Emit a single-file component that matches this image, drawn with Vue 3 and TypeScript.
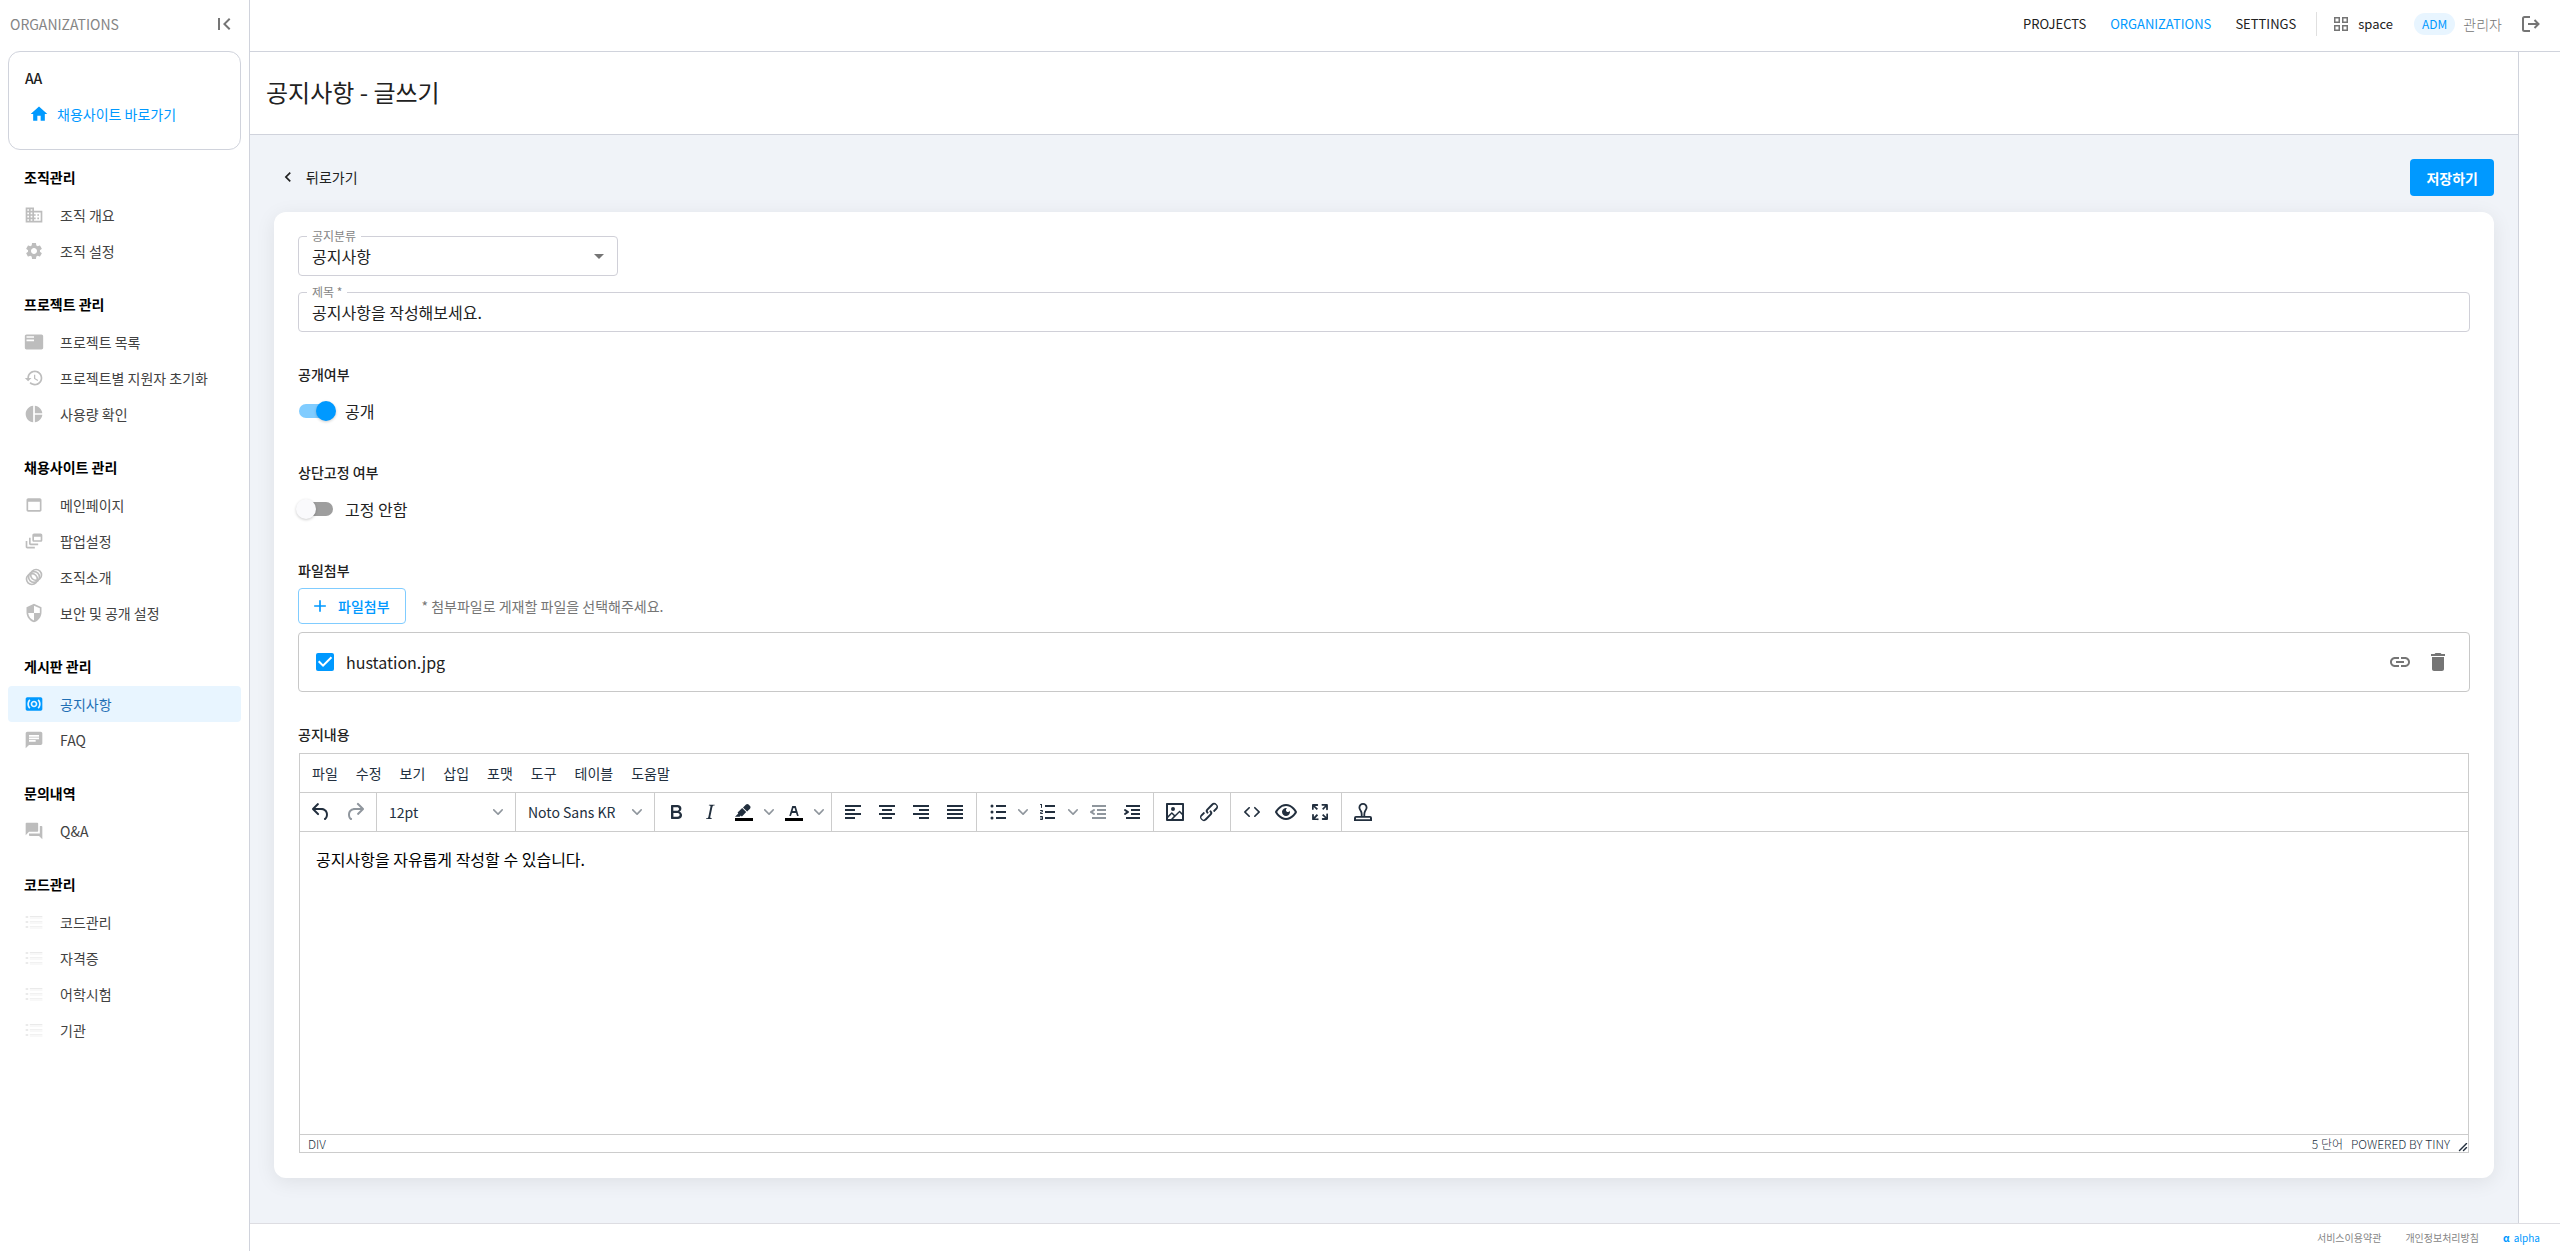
<script setup lang="ts">
import { ref } from 'vue'

interface MenuItem {
  label: string
  icon: string
  active?: boolean
}
interface MenuGroup {
  title: string
  items: MenuItem[]
}
interface Tool {
  name: string
  paths: string[]
  split?: boolean
  disabled?: boolean
  bar?: boolean
}

const icons: Record<string, string> = {
  business:
    'M12 7V3H2v18h20V7H12zM6 19H4v-2h2v2zm0-4H4v-2h2v2zm0-4H4V9h2v2zm0-4H4V5h2v2zm4 12H8v-2h2v2zm0-4H8v-2h2v2zm0-4H8V9h2v2zm0-4H8V5h2v2zm10 12h-8v-2h2v-2h-2v-2h2v-2h-2V9h8v10zm-2-8h-2v2h2v-2zm0 4h-2v2h2v-2z',
  settings:
    'M19.14 12.94c.04-.3.06-.61.06-.94 0-.32-.02-.64-.07-.94l2.03-1.58c.18-.14.23-.41.12-.61l-1.92-3.32c-.12-.22-.37-.29-.59-.22l-2.39.96c-.5-.38-1.03-.7-1.62-.94l-.36-2.54c-.04-.24-.24-.41-.48-.41h-3.84c-.24 0-.43.17-.47.41l-.36 2.54c-.59.24-1.13.57-1.62.94l-2.39-.96c-.22-.08-.47 0-.59.22L2.74 8.87c-.12.21-.08.47.12.61l2.03 1.58c-.05.3-.09.63-.09.94s.02.64.07.94l-2.03 1.58c-.18.14-.23.41-.12.61l1.92 3.32c.12.22.37.29.59.22l2.39-.96c.5.38 1.03.7 1.62.94l.36 2.54c.05.24.24.41.48.41h3.84c.24 0 .44-.17.47-.41l.36-2.54c.59-.24 1.13-.56 1.62-.94l2.39.96c.22.08.47 0 .59-.22l1.92-3.32c.12-.22.07-.47-.12-.61l-2.01-1.58zM12 15.6c-1.98 0-3.6-1.62-3.6-3.6s1.62-3.6 3.6-3.6 3.6 1.62 3.6 3.6-1.62 3.6-3.6 3.6z',
  playlist:
    'M21 3H3c-1.1 0-2 .9-2 2v14c0 1.1.9 2 2 2h18c1.1 0 2-.9 2-2V5c0-1.1-.9-2-2-2zm-9 8H3V9h9v2zm0-4H3V5h9v2z',
  restore:
    'M13 3c-4.97 0-9 4.03-9 9H1l3.89 3.89.07.14L9 12H6c0-3.87 3.13-7 7-7s7 3.13 7 7-3.13 7-7 7c-1.93 0-3.68-.79-4.94-2.06l-1.42 1.42C8.27 19.99 10.51 21 13 21c4.97 0 9-4.03 9-9s-4.03-9-9-9zm-1 5v5l4.28 2.54.72-1.21-3.5-2.08V8H12z',
  pie: 'M11 2v20c-5.07-.5-9-4.79-9-10s3.93-9.5 9-10zm2.03 0v8.99H22c-.47-4.74-4.24-8.52-8.97-8.99zm0 11.01V22c4.74-.47 8.5-4.25 8.97-8.99h-8.97z',
  web: 'M19 4H5c-1.11 0-2 .9-2 2v12c0 1.1.89 2 2 2h14c1.1 0 2-.9 2-2V6c0-1.1-.89-2-2-2zm0 14H5V8h14v10z',
  feed: 'M8 8H6v7c0 1.1.9 2 2 2h9v-2H8V8zM20 3h-8c-1.1 0-2 .9-2 2v6c0 1.1.9 2 2 2h8c1.1 0 2-.9 2-2V5c0-1.1-.9-2-2-2zm0 8h-8V7h8v4zM4 12H2v7c0 1.1.9 2 2 2h9v-2H4v-7z',
  shield:
    'M12 1L3 5v6c0 5.55 3.84 10.74 9 12 5.16-1.26 9-6.45 9-12V5l-9-4zM12 12H5c.53 4.12 3.28 7.79 7 8.94V12h7V6.3l-7-3.11z',
  surround:
    'M20 4H4c-1.1 0-2 .9-2 2v12c0 1.1.9 2 2 2h16c1.1 0 2-.9 2-2V6c0-1.1-.9-2-2-2zM7.76 16.24l-1.41 1.41C4.78 16.1 4 14.05 4 12s.78-4.1 2.34-5.66l1.41 1.41C6.59 8.93 6 10.46 6 12s.59 3.07 1.76 4.24zM12 16c-2.21 0-4-1.79-4-4s1.79-4 4-4 4 1.79 4 4-1.79 4-4 4zm5.66 1.66l-1.41-1.41C17.41 15.07 18 13.54 18 12s-.59-3.07-1.76-4.24l1.41-1.41C19.22 7.9 20 9.95 20 12s-.78 4.1-2.34 5.66zM12 10c-1.1 0-2 .9-2 2s.9 2 2 2 2-.9 2-2-.9-2-2-2z',
  chat: 'M20 2H4c-1.1 0-1.99.9-1.99 2L2 22l4-4h14c1.1 0 2-.9 2-2V4c0-1.1-.9-2-2-2zM6 9h12v2H6V9zm8 5H6v-2h8v2zm4-6H6V6h12v2z',
  qna: 'M21 6h-2v9H6v2c0 .55.45 1 1 1h11l4 4V7c0-.55-.45-1-1-1zm-4 6V3c0-.55-.45-1-1-1H3c-.55 0-1 .45-1 1v14l4-4h10c.55 0 1-.45 1-1z',
  list: 'M2 5h3v2H2zM2 11h3v2H2zM2 17h3v2H2zM7 5h15v1H7zM7 7h15v.5H7zM7 11h15v.7H7zM7 13h15v.5H7zM7 17h15v.7H7zM7 19h15v.5H7z',
}

const groups: MenuGroup[] = [
  {
    title: '조직관리',
    items: [
      { label: '조직 개요', icon: 'business' },
      { label: '조직 설정', icon: 'settings' },
    ],
  },
  {
    title: '프로젝트 관리',
    items: [
      { label: '프로젝트 목록', icon: 'playlist' },
      { label: '프로젝트별 지원자 초기화', icon: 'restore' },
      { label: '사용량 확인', icon: 'pie' },
    ],
  },
  {
    title: '채용사이트 관리',
    items: [
      { label: '메인페이지', icon: 'web' },
      { label: '팝업설정', icon: 'feed' },
      { label: '조직소개', icon: 'rings' },
      { label: '보안 및 공개 설정', icon: 'shield' },
    ],
  },
  {
    title: '게시판 관리',
    items: [
      { label: '공지사항', icon: 'surround', active: true },
      { label: 'FAQ', icon: 'chat' },
    ],
  },
  { title: '문의내역', items: [{ label: 'Q&A', icon: 'qna' }] },
  {
    title: '코드관리',
    items: [
      { label: '코드관리', icon: 'list' },
      { label: '자격증', icon: 'list' },
      { label: '어학시험', icon: 'list' },
      { label: '기관', icon: 'list' },
    ],
  },
]

const editorMenus = ['파일', '수정', '보기', '삽입', '포맷', '도구', '테이블', '도움말']

const historyTools: Tool[] = [
  {
    name: '실행 취소',
    paths: [
      'M6.4 8H12c3.7 0 6.2 2 6.8 5.1.6 2.7-.4 5.6-2.3 6.8a1 1 0 01-1-1.8c1.1-.6 1.8-2.7 1.4-4.6-.5-2.1-2.1-3.5-4.9-3.5H6.4l3.3 3.3a1 1 0 11-1.4 1.4l-5-5a1 1 0 010-1.4l5-5a1 1 0 011.4 1.4L6.4 8z',
    ],
  },
  {
    name: '다시 실행',
    disabled: true,
    paths: [
      'M17.6 10H12c-2.8 0-4.4 1.4-4.9 3.5-.4 2 .3 4 1.4 4.6a1 1 0 11-1 1.8c-2-1.2-2.9-4.1-2.3-6.8.6-3 3-5.1 6.8-5.1h5.6l-3.3-3.3a1 1 0 111.4-1.4l5 5a1 1 0 010 1.4l-5 5a1 1 0 01-1.4-1.4l3.3-3.3z',
    ],
  },
]

const toolGroups: Tool[][] = [
  [
    {
      name: '굵게',
      paths: [
        'M7.8 19c-.3 0-.5 0-.6-.2l-.2-.5V5.7c0-.2 0-.4.2-.5l.6-.2h5c1.5 0 2.7.3 3.5 1 .7.6 1.1 1.4 1.1 2.5a3 3 0 01-.6 1.9c-.4.6-1 1-1.6 1.2.4.1.9.3 1.3.6s.8.7 1 1.2c.4.4.5 1 .5 1.6 0 1.3-.4 2.3-1.3 3-.8.7-2.1 1-3.8 1H7.8zm5-8.3c.6 0 1.2-.1 1.6-.5.4-.3.6-.7.6-1.3 0-1.1-.8-1.7-2.3-1.7H9.3v3.5h3.4zm.5 6c.7 0 1.3-.1 1.7-.4.4-.4.6-.9.6-1.5s-.2-1-.7-1.4c-.4-.3-1-.4-2-.4H9.4v3.8h4z',
      ],
    },
    {
      name: '기울임꼴',
      paths: [
        'M16.7 4.7l-.1.9h-.3c-.6 0-1 0-1.4.3-.3.3-.4.6-.5 1.1l-2.1 9.8v.6c0 .5.4.8 1.4.8h.2l-.2.8H8l.2-.8h.2c1.1 0 1.8-.5 2-1.5l2-9.8.1-.5c0-.6-.4-.8-1.4-.8h-.3l.2-.9h5.8z',
      ],
    },
    {
      name: '배경색',
      split: true,
      bar: true,
      paths: [
        'M7.7 16.7H3l3.3-3.3-.7-.8L10.2 8l4 4.1-4 4.2c-.2.2-.6.2-.8 0l-.6-.7-1.1 1.1zm5-7.5L11 7.4l3-2.9a2 2 0 012.6 0L18 6c.7.7.7 2 0 2.7l-2.9 2.9-1.8-1.8-.5-.6',
      ],
    },
    {
      name: '글자색',
      split: true,
      bar: true,
      paths: [
        'M8.7 16h-.8a.5.5 0 01-.5-.6l2.7-9c.1-.3.3-.4.5-.4h2.8c.2 0 .4.1.5.4l2.7 9a.5.5 0 01-.5.6h-.8a.5.5 0 01-.4-.4l-.7-2.2c0-.3-.3-.4-.5-.4h-3.4c-.2 0-.4.1-.5.4l-.7 2.2c0 .3-.2.4-.4.4zm2.6-7.6l-.6 2a.5.5 0 00.5.6h1.6a.5.5 0 00.5-.6l-.6-2c0-.3-.3-.4-.5-.4h-.4c-.2 0-.4.1-.5.4z',
      ],
    },
  ],
  [
    { name: '왼쪽 정렬', paths: ['M4 5h16v2H4zM4 9h10v2H4zM4 13h16v2H4zM4 17h10v2H4z'] },
    { name: '가운데 정렬', paths: ['M4 5h16v2H4zM7 9h10v2H7zM4 13h16v2H4zM7 17h10v2H7z'] },
    { name: '오른쪽 정렬', paths: ['M4 5h16v2H4zM10 9h10v2H10zM4 13h16v2H4zM10 17h10v2H10z'] },
    { name: '양쪽 정렬', paths: ['M4 5h16v2H4zM4 9h16v2H4zM4 13h16v2H4zM4 17h16v2H4z'] },
  ],
  [
    {
      name: '글머리 기호',
      split: true,
      paths: [
        'M10 5h10v2H10zM10 11h10v2H10zM10 17h10v2H10zM6 4.5a1.5 1.5 0 100 3 1.5 1.5 0 000-3zM6 10.5a1.5 1.5 0 100 3 1.5 1.5 0 000-3zM6 16.5a1.5 1.5 0 100 3 1.5 1.5 0 000-3z',
      ],
    },
    {
      name: '번호 매기기',
      split: true,
      paths: [
        'M9 17h10v2H9zM9 11h10v2H9zM9 5h10v2H9zM6 4v3.5c0 .3-.2.5-.5.5a.5.5 0 01-.5-.5V5h-.5a.5.5 0 010-1H6zm-1 8.8l.2.2h1.3c.3 0 .5.2.5.5s-.2.5-.5.5H4.9a1 1 0 01-.9-1V13c0-.4.3-.8.6-1l1.2-.4.2-.3a.2.2 0 00-.2-.2H4.5a.5.5 0 01-.5-.5c0-.3.2-.5.5-.5h1.6c.5 0 .9.4.9 1v.1c0 .4-.3.8-.6 1l-1.2.4-.2.3zM7 17v2c0 .6-.4 1-1 1H4.5a.5.5 0 010-1h1.2c.2 0 .3-.1.3-.3 0-.2-.1-.3-.3-.3H4.4a.4.4 0 110-.8h1.3c.2 0 .3-.1.3-.3 0-.2-.1-.3-.3-.3H4.5a.5.5 0 110-1H6c.6 0 1 .4 1 1z',
      ],
    },
    {
      name: '내어쓰기',
      disabled: true,
      paths: [
        'M6 5h14v2H6zM11 9h9v2h-9zM11 13h9v2h-9zM6 17h14v2H6zM8.6 13.2a1 1 0 01-1.2 1.6l-3-2a1 1 0 010-1.6l3-2a1 1 0 011.2 1.6L6.8 12l1.8 1.2z',
      ],
    },
    {
      name: '들여쓰기',
      paths: [
        'M6 5h14v2H6zM11 9h9v2h-9zM11 13h9v2h-9zM6 17h14v2H6zM4.4 13.2L6.2 12l-1.8-1.2a1 1 0 011.2-1.6l3 2a1 1 0 010 1.6l-3 2a1 1 0 11-1.2-1.6z',
      ],
    },
  ],
  [
    {
      name: '이미지',
      paths: [
        'M5 15.7l3.3-3.2c.3-.3.7-.3 1 0L12 15l4.1-4c.3-.4.8-.4 1 0l2 1.9V5H5v10.7zM5 18V19h3l2.8-2.9-2-2L5 17.9zm14-3l-2.5-2.4-6.4 6.5H19v-4zM4 3h16c.6 0 1 .4 1 1v16c0 .6-.4 1-1 1H4a1 1 0 01-1-1V4c0-.6.4-1 1-1zm6 8a2 2 0 100-4 2 2 0 000 4z',
      ],
    },
    {
      name: '링크',
      paths: [
        'M6.2 12.3a1 1 0 011.4 1.4l-2.1 2a2 2 0 102.7 2.8l4.8-4.8a1 1 0 000-1.4 1 1 0 111.4-1.3 2.9 2.9 0 010 4L9.6 20a3.9 3.9 0 01-5.5-5.5l2-2zm11.6-.6a1 1 0 01-1.4-1.4l2-2a2 2 0 10-2.6-2.8L11 10.3a1 1 0 000 1.4A1 1 0 119.6 13a2.9 2.9 0 010-4L14.4 4a3.9 3.9 0 015.5 5.5l-2 2z',
      ],
    },
  ],
  [
    {
      name: '소스 코드',
      paths: [
        'M9.8 15.7c.3.3.3.8 0 1-.3.4-.9.4-1.2 0l-4.4-4.1a.8.8 0 010-1.2l4.4-4.2c.3-.3.9-.3 1.2 0 .3.3.3.8 0 1.1L6 12l3.8 3.7zM14.2 15.7c-.3.3-.3.8 0 1 .4.4.9.4 1.2 0l4.4-4.1c.3-.3.3-.9 0-1.2l-4.4-4.2a.8.8 0 00-1.2 0c-.3.3-.3.8 0 1.1L18 12l-3.8 3.7z',
      ],
    },
    {
      name: '미리보기',
      paths: [
        'M3.5 12.5c.5.8 1.1 1.6 1.8 2.3 2 2 4.2 3.2 6.7 3.2s4.7-1.2 6.7-3.2a16.2 16.2 0 002.1-2.8 15.7 15.7 0 00-2.1-2.8c-2-2-4.2-3.2-6.7-3.2a9.3 9.3 0 00-6.7 3.2A16.2 16.2 0 003.2 12c0 .2.2.3.3.5zm-2.4-1l.7-1.2L4 7.8C6.2 5.4 8.9 4 12 4c3 0 5.8 1.4 8.1 3.8a18.2 18.2 0 012.8 3.7v1l-.7 1.2-2.1 2.5c-2.3 2.4-5 3.8-8.1 3.8-3 0-5.8-1.4-8.1-3.8a18.2 18.2 0 01-2.8-3.7 1 1 0 010-1zm12-3.3a2 2 0 102.7 2.6 4 4 0 11-2.6-2.6z',
      ],
    },
    {
      name: '전체 화면',
      paths: [
        'M15.3 10l-1.2-1.3 2.9-3h-2.3a.9.9 0 110-1.7H19c.5 0 .9.4.9.9v4.4a.9.9 0 11-1.8 0V7l-2.9 3zm0 4l3 3v-2.3a.9.9 0 111.7 0V19c0 .5-.4.9-.9.9h-4.4a.9.9 0 110-1.8H17l-3-2.9 1.3-1.2zM10 15.4l-2.9 3h2.3a.9.9 0 110 1.7H5a.9.9 0 01-.9-.9v-4.4a.9.9 0 111.8 0V17l2.9-3 1.2 1.3zM8.7 10L5.7 7v2.3a.9.9 0 01-1.7 0V5c0-.5.4-.9.9-.9h4.4a.9.9 0 010 1.8H7l3 2.9-1.3 1.2z',
      ],
    },
  ],
  [
    {
      name: '도장',
      paths: [
        'M12 3a4.5 4.5 0 00-4.5 4.5c0 1.5.9 2.7 1.6 3.9.5.9.7 1.8.7 3V16H5a2 2 0 00-2 2v3h18v-3a2 2 0 00-2-2h-4.8v-1.6c0-1.2.2-2.1.7-3 .7-1.2 1.6-2.4 1.6-3.9A4.5 4.5 0 0012 3zm0 1.8c1.5 0 2.7 1.2 2.7 2.7 0 1-.6 1.9-1.3 3-.6 1.1-1 2.3-1 3.9V16h-.8v-1.6c0-1.6-.4-2.8-1-3.9-.7-1.1-1.3-2-1.3-3 0-1.5 1.2-2.7 2.7-2.7zM5 17.8h14v1.4H5z',
      ],
    },
  ],
]

const category = ref('공지사항')
const title = ref('공지사항을 작성해보세요.')
const isOpen = ref(true)
const isPinned = ref(false)
const fileChecked = ref(true)
const fontSize = ref('12pt')
const fontFamily = ref('Noto Sans KR')
const body = ref('공지사항을 자유롭게 작성할 수 있습니다.')
</script>

<template>
  <div class="shell">
    <aside class="sidebar">
      <div class="side-head">
        <span>ORGANIZATIONS</span>
        <button type="button" class="plain" aria-label="메뉴 접기">
          <svg class="i24" viewBox="0 0 24 24"><path d="M18.41 16.59L13.82 12l4.59-4.59L17 6l-6 6 6 6zM6 6h2v12H6z" /></svg>
        </button>
      </div>
      <div class="org">
        <strong>AA</strong>
        <a href="#">
          <svg class="i20" viewBox="0 0 24 24"><path d="M10 20v-6h4v6h5v-8h3L12 3 2 12h3v8z" /></svg>
          채용사이트 바로가기
        </a>
      </div>
      <nav>
        <section v-for="group in groups" :key="group.title" class="group">
          <h2>{{ group.title }}</h2>
          <a v-for="item in group.items" :key="item.label" href="#" class="item" :class="{ active: item.active, faint: item.icon === 'list' }">
            <svg v-if="item.icon === 'rings'" class="i20 rings" viewBox="0 0 24 24">
              <circle cx="9.5" cy="14.5" r="6.5" />
              <circle cx="12" cy="12" r="6.5" />
              <circle cx="14.500" cy="9.5" r="6.5" />
            </svg>
            <svg v-else class="i20" viewBox="0 0 24 24"><path fill-rule="evenodd" :d="icons[item.icon]" /></svg>
            <span>{{ item.label }}</span>
          </a>
        </section>
      </nav>
    </aside>

    <div class="column">
      <header class="top">
        <nav class="links">
          <a href="#">PROJECTS</a>
          <a href="#" class="on">ORGANIZATIONS</a>
          <a href="#">SETTINGS</a>
        </nav>
        <a href="#" class="space">
          <svg viewBox="0 0 14 14" width="14" height="14"><path fill-rule="evenodd" d="M0 0h6v6H0zM1.5 1.5v3h3v-3zM8 0h6v6H8zM9.5 1.5v3h3v-3zM0 8h6v6H0zM1.5 9.5v3h3v-3zM8 8h6v6H8zM9.5 9.5v3h3v-3z" /></svg>
          space
        </a>
        <span class="role">ADM</span>
        <span class="user">관리자</span>
        <button type="button" class="plain" aria-label="로그아웃">
          <svg viewBox="0 0 18 18" width="18" height="18" fill="none" stroke="currentColor" stroke-width="2"><path d="M8 2H2.500A1.500 1.500 0 001 3.500v11A1.500 1.500 0 002.500 16H8" /><path d="M6 9h10.500M12.500 5l4 4-4 4" /></svg>
        </button>
      </header>

      <div class="middle">
        <main>
          <div class="titlebar"><h1>공지사항 - 글쓰기</h1></div>
          <div class="content">
            <div class="actions">
              <a href="#" class="back">
                <svg class="i20" viewBox="0 0 24 24"><path d="M15.41 7.41L14 6l-6 6 6 6 1.41-1.41L10.83 12z" /></svg>
                뒤로가기
              </a>
              <button type="button" class="save">저장하기</button>
            </div>

            <form class="card" @submit.prevent>
              <div class="field short">
                <label for="category">공지분류</label>
                <select id="category" v-model="category"><option>공지사항</option></select>
                <svg class="i24 caret" viewBox="0 0 24 24"><path d="M7 10l5 5 5-5z" /></svg>
              </div>
              <div class="field">
                <label for="title">제목 *</label>
                <input id="title" v-model="title" type="text" />
              </div>

              <section class="block">
                <h3>공개여부</h3>
                <label class="toggle"><input v-model="isOpen" type="checkbox" role="switch" />{{ isOpen ? '공개' : '비공개' }}</label>
              </section>
              <section class="block">
                <h3>상단고정 여부</h3>
                <label class="toggle"><input v-model="isPinned" type="checkbox" role="switch" />{{ isPinned ? '고정' : '고정 안함' }}</label>
              </section>
              <section class="block">
                <h3>파일첨부</h3>
                <div class="attach">
                  <button type="button">
                    <svg class="i20" viewBox="0 0 24 24"><path d="M19 13h-6v6h-2v-6H5v-2h6V5h2v6h6v2z" /></svg>
                    파일첨부
                  </button>
                  <span>* 첨부파일로 게재할 파일을 선택해주세요.</span>
                </div>
                <div class="file">
                  <label><input v-model="fileChecked" type="checkbox" />hustation.jpg</label>
                  <button type="button" class="plain" aria-label="링크 복사">
                    <svg class="i24" viewBox="0 0 24 24"><path d="M3.9 12c0-1.71 1.39-3.1 3.1-3.1h4V7H7c-2.76 0-5 2.24-5 5s2.24 5 5 5h4v-1.9H7c-1.71 0-3.1-1.39-3.1-3.1zM8 13h8v-2H8v2zm9-6h-4v1.9h4c1.71 0 3.1 1.39 3.1 3.1s-1.39 3.1-3.1 3.1h-4V17h4c2.76 0 5-2.24 5-5s-2.24-5-5-5z" /></svg>
                  </button>
                  <button type="button" class="plain" aria-label="삭제">
                    <svg class="i24" viewBox="0 0 24 24"><path d="M6 19c0 1.1.9 2 2 2h8c1.1 0 2-.9 2-2V7H6v12zM19 4h-3.5l-1-1h-5l-1 1H5v2h14V4z" /></svg>
                  </button>
                </div>
              </section>
              <section class="block">
                <h3>공지내용</h3>
                <div class="editor">
                  <div class="menubar">
                    <button v-for="m in editorMenus" :key="m" type="button">{{ m }}</button>
                  </div>
                  <div class="toolbar">
                    <div class="tools">
                      <button v-for="t in historyTools" :key="t.name" type="button" class="tool" :disabled="t.disabled" :aria-label="t.name">
                        <svg class="i24" viewBox="0 0 24 24"><path v-for="p in t.paths" :key="p" :d="p" /></svg>
                      </button>
                    </div>
                    <div class="tools pick">
                      <select v-model="fontSize" aria-label="글자 크기"><option>12pt</option></select>
                      <svg class="chev" viewBox="0 0 10 10"><path d="M8.7 2.2c.3-.3.8-.3 1 0 .4.4.4.9 0 1.2L5.7 7.8c-.3.3-.9.3-1.2 0L.2 3.4a.8.8 0 010-1.2c.3-.3.8-.3 1.1 0L5 6l3.7-3.8z" /></svg>
                    </div>
                    <div class="tools pick">
                      <select v-model="fontFamily" aria-label="글꼴"><option>Noto Sans KR</option></select>
                      <svg class="chev" viewBox="0 0 10 10"><path d="M8.7 2.2c.3-.3.8-.3 1 0 .4.4.4.9 0 1.2L5.7 7.8c-.3.3-.9.3-1.2 0L.2 3.4a.8.8 0 010-1.2c.3-.3.8-.3 1.1 0L5 6l3.7-3.8z" /></svg>
                    </div>
                    <div v-for="(g, i) in toolGroups" :key="i" class="tools">
                      <template v-for="t in g" :key="t.name">
                        <button type="button" class="tool" :disabled="t.disabled" :aria-label="t.name">
                          <svg class="i24" viewBox="0 0 24 24">
                            <path v-if="t.bar" class="bar" d="M3 18h18v3H3z" />
                            <path v-for="p in t.paths" :key="p" :d="p" />
                          </svg>
                        </button>
                        <button v-if="t.split" type="button" class="more" :aria-label="t.name + ' 옵션'">
                          <svg class="chev" viewBox="0 0 10 10"><path d="M8.7 2.2c.3-.3.8-.3 1 0 .4.4.4.9 0 1.2L5.7 7.8c-.3.3-.9.3-1.2 0L.2 3.4a.8.8 0 010-1.2c.3-.3.8-.3 1.1 0L5 6l3.7-3.8z" /></svg>
                        </button>
                      </template>
                    </div>
                  </div>
                  <textarea v-model="body" aria-label="공지내용"></textarea>
                  <div class="status">
                    <span class="path">DIV</span>
                    <span>5 단어</span>
                    <a href="#">POWERED BY TINY</a>
                    <svg viewBox="0 0 10 10" width="10" height="10"><path d="M8.1 1.1A.5.5 0 119 2l-7 7A.5.5 0 111 8l7-7zM8.1 5.1A.5.5 0 119 6l-3 3A.5.5 0 115 8l3-3z" /></svg>
                  </div>
                </div>
              </section>
            </form>
          </div>
        </main>
        <div class="gutter"></div>
      </div>

      <footer>
        <a href="#">서비스이용약관</a>
        <a href="#">개인정보처리방침</a>
        <span class="brand"><b>α</b>alpha</span>
      </footer>
    </div>
  </div>
</template>

<style>
body {
  margin: 0;
  background: #fff;
}
</style>

<style scoped>
.shell,
.shell * {
  box-sizing: border-box;
}
.shell {
  display: flex;
  min-height: 100vh;
  font-family: 'Noto Sans CJK KR', sans-serif;
  font-size: 14px;
  line-height: 22px;
  color: #212121;
}
.shell a {
  color: inherit;
  text-decoration: none;
}
.shell button,
.shell input,
.shell select,
.shell textarea {
  margin: 0;
  font: inherit;
  color: inherit;
}
h1,
h2,
h3 {
  margin: 0;
}
svg {
  display: block;
  flex: none;
  fill: currentColor;
}
.i20 {
  width: 20px;
  height: 20px;
}
.i24 {
  width: 24px;
  height: 24px;
}
.plain {
  padding: 0;
  border: 0;
  background: none;
}
.shell .plain {
  color: #757575;
}

.sidebar {
  flex: none;
  width: 250px;
  padding: 0 8px;
  border-right: 1px solid #d0d3dc;
}
.side-head {
  display: flex;
  justify-content: space-between;
  align-items: center;
  height: 51px;
  padding: 0 5px 3px 2px;
  color: #858585;
}
.org {
  height: 99px;
  padding: 15px 16px;
  border: 1px solid #d0d3dc;
  border-radius: 12px;
}
.org strong {
  display: block;
  font-weight: 500;
}
.org a {
  display: flex;
  align-items: center;
  gap: 8px;
  padding: 14px 0 0 4px;
}
.shell .org a {
  color: #0099ff;
}
.group {
  margin-bottom: 16px;
}
nav .group:first-child {
  margin-top: 8px;
}
.group h2 {
  padding-left: 16px;
  font-size: 14px;
  line-height: 39px;
  font-weight: 700;
  color: #000;
}
.item {
  display: flex;
  align-items: center;
  gap: 16px;
  height: 36px;
  padding: 0 16px;
  border-radius: 4px;
}
.shell .item {
  color: #424242;
}
.item svg {
  color: #bdbdbd;
}
.rings {
  fill: none;
  stroke: currentColor;
  stroke-width: 2;
}
.item.faint svg {
  opacity: 0.4;
}
.shell .item.active {
  background: #e8f5ff;
  color: #1f6fb5;
}
.item.active svg {
  color: #0099ff;
}

.column {
  display: flex;
  flex: 1;
  flex-direction: column;
  min-width: 0;
}
.top {
  display: flex;
  justify-content: flex-end;
  align-items: center;
  height: 52px;
  padding: 0 20px 4px 0;
  border-bottom: 1px solid #d0d3dc;
}
.links {
  display: flex;
  gap: 24px;
  margin-right: 20px;
  font-size: 13px;
}
.shell .links .on {
  color: #0099ff;
}
.space {
  display: flex;
  align-items: center;
  gap: 10px;
  height: 24px;
  padding: 0 21px 0 17px;
  border-left: 1px solid #e0e0e0;
  font-size: 13px;
}
.space svg {
  color: #757575;
}
.role {
  padding: 0 8px;
  border-radius: 11px;
  background: #e8f5ff;
  font-size: 12px;
  color: #0099ff;
}
.user {
  margin: 0 20px 0 8px;
  color: #757575;
  font-weight: 300;
}
.top .plain svg {
  fill: none;
}

.middle {
  display: flex;
  flex: 1;
}
main {
  display: flex;
  flex: 1;
  flex-direction: column;
  min-width: 0;
}
.gutter {
  width: 42px;
  border-left: 1px solid #d0d3dc;
}
.titlebar {
  display: flex;
  align-items: center;
  height: 83px;
  padding: 0 16px 2px;
  border-bottom: 1px solid #d0d3dc;
}
h1 {
  font-size: 24px;
  line-height: 36px;
  font-weight: 400;
}
.content {
  flex: 1;
  padding: 24px 24px 45px;
  background: #f0f3f8;
}
.actions {
  display: flex;
  justify-content: space-between;
  align-items: center;
  margin-bottom: 16px;
}
.back {
  display: flex;
  align-items: center;
  gap: 8px;
  padding: 0 4px 2px;
}
.shell .save {
  height: 37px;
  padding: 0 16px;
  border: 0;
  border-radius: 4px;
  background: #0099ff;
  font-weight: 700;
  color: #fff;
}
.card {
  padding: 24px;
  border-radius: 12px;
  background: #fff;
  box-shadow: 0 4px 20px rgba(0, 0, 0, 0.08);
}
.field {
  position: relative;
  height: 40px;
  border: 1px solid #d0d0d8;
  border-radius: 4px;
  font-size: 16px;
}
.field + .field {
  margin-top: 16px;
}
.field.short {
  width: 320px;
}
.field label {
  position: absolute;
  top: -10px;
  left: 8px;
  padding: 0 5px;
  background: #fff;
  font-size: 12px;
  line-height: 18px;
  color: #858585;
}
.field input,
.field select {
  display: block;
  width: 100%;
  height: 38px;
  padding: 0 13px;
  border: 0;
  outline: 0;
  background: none;
  appearance: none;
}
.caret {
  position: absolute;
  top: 7px;
  right: 6px;
  color: #757575;
  pointer-events: none;
}
.block {
  display: flex;
  flex-direction: column;
  margin-top: 32px;
}
h3 {
  margin-bottom: 8px;
  font-size: 14px;
  line-height: 20px;
  font-weight: 500;
}
.toggle {
  display: flex;
  align-items: center;
  gap: 12px;
  width: max-content;
  height: 38px;
  padding-left: 1px;
  font-size: 16px;
}
.toggle input {
  position: relative;
  width: 34px;
  height: 14px;
  border-radius: 7px;
  background: #9e9e9e;
  appearance: none;
}
.toggle input::before {
  content: '';
  position: absolute;
  top: -3px;
  left: -3px;
  width: 20px;
  height: 20px;
  border-radius: 50%;
  background: #fafafc;
  box-shadow: 0 1px 3px rgba(0, 0, 0, 0.2);
}
.toggle input:checked {
  background: #80ccff;
}
.toggle input:checked::before {
  left: 17px;
  background: #0099ff;
}
.attach {
  display: flex;
  align-items: center;
  gap: 16px;
  margin-bottom: 8px;
  color: #757575;
}
.shell .attach button {
  display: flex;
  align-items: center;
  gap: 8px;
  height: 36px;
  padding: 0 15px 0 11px;
  border: 1px solid #80ccff;
  border-radius: 4px;
  background: #fff;
  font-weight: 500;
  color: #0099ff;
}
.file {
  display: flex;
  align-items: center;
  gap: 14px;
  height: 60px;
  padding: 0 19px 0 17px;
  border: 1px solid #c8c8c8;
  border-radius: 4px;
  font-size: 16px;
}
.file label {
  display: flex;
  flex: 1;
  align-items: center;
  gap: 12px;
}
.file input {
  position: relative;
  width: 18px;
  height: 18px;
  border: 2px solid #757575;
  border-radius: 2px;
  appearance: none;
}
.file input:checked {
  border: 0;
  background: #0099ff;
}
.file input:checked::before {
  content: '';
  position: absolute;
  inset: 0;
  background: #fff;
  clip-path: polygon(11% 50%, 19% 42%, 39% 62%, 82% 20%, 90% 28%, 39% 78%);
}

.editor {
  margin: 1px;
  border: 1px solid #ccc;
  color: #222f3e;
}
.menubar {
  display: flex;
  gap: 10px;
  height: 38px;
  padding: 0 8px;
}
.menubar button {
  padding: 0 4px;
  border: 0;
  background: none;
}
.toolbar {
  display: flex;
  height: 40px;
  border-top: 1px solid #ccc;
  border-bottom: 1px solid #ccc;
}
.tools {
  display: flex;
  align-items: center;
  padding: 0 4px;
  border-right: 1px solid #ccc;
}
.tools:last-child {
  border-right: 0;
}
.tool {
  display: flex;
  align-items: center;
  justify-content: center;
  width: 34px;
  height: 34px;
  padding: 0;
  border: 0;
  background: none;
}
.tool:disabled svg {
  opacity: 0.5;
}
.bar {
  fill: #000;
}
.more {
  width: 16px;
  padding: 0 3px;
  border: 0;
  background: none;
}
.chev {
  width: 10px;
  height: 10px;
  opacity: 0.5;
}
.pick {
  position: relative;
}
.pick select {
  width: 130px;
  height: 34px;
  padding: 0 8px;
  border: 0;
  background: none;
  appearance: none;
}
.pick .chev {
  position: absolute;
  right: 12px;
  top: 14px;
  pointer-events: none;
}
.shell textarea {
  display: block;
  width: 100%;
  height: 302px;
  padding: 16px;
  border: 0;
  outline: 0;
  resize: none;
  background: #fff;
  font-size: 16px;
  color: #000;
}
.status {
  display: flex;
  align-items: center;
  gap: 8px;
  height: 18px;
  padding-left: 8px;
  border-top: 1px solid #ccc;
  font-size: 12px;
  line-height: 17px;
  font-weight: 300;
}
.path {
  flex: 1;
}
.status svg {
  align-self: flex-end;
}

footer {
  display: flex;
  justify-content: flex-end;
  align-items: center;
  gap: 24px;
  height: 28px;
  padding-right: 20px;
  border-top: 1px solid #dddde2;
  font-size: 10px;
  color: #858585;
}
.brand {
  display: flex;
  gap: 4px;
  color: #0099ff;
}
</style>
